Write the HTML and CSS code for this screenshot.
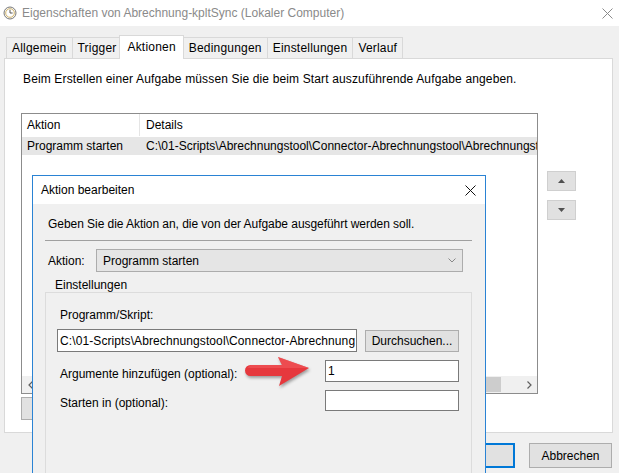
FILE: index.html
```html
<!DOCTYPE html>
<html lang="de">
<head>
<meta charset="utf-8">
<title>Eigenschaften</title>
<link rel="stylesheet" href="styles.css">
</head>
<body>
<div class="win">
  <div class="titlebar">
    <svg class="appicon" viewBox="0 0 14 14"><circle cx="7" cy="7" r="6" fill="#f4f4f4" stroke="#7a7a7a" stroke-width="1"/><circle cx="7" cy="7" r="4.3" fill="#fff" stroke="#c9a64a" stroke-width="0.8"/><path d="M7 3.8V7h2.6" fill="none" stroke="#555" stroke-width="1"/></svg>
    <span class="title">Eigenschaften von Abrechnung-kpltSync (Lokaler Computer)</span>
    <svg class="xicon" viewBox="0 0 11 11"><path d="M0.5 0.5L10.5 10.5M10.5 0.5L0.5 10.5" stroke="#8a8a8a" stroke-width="1"/></svg>
  </div>
  <div class="tabs">
    <div class="tab">Allgemein</div>
    <div class="tab">Trigger</div>
    <div class="tab active">Aktionen</div>
    <div class="tab">Bedingungen</div>
    <div class="tab">Einstellungen</div>
    <div class="tab">Verlauf</div>
  </div>
  <div class="panel">
    <p class="intro">Beim Erstellen einer Aufgabe müssen Sie die beim Start auszuführende Aufgabe angeben.</p>
    <div class="listrow">
      <div class="list">
        <div class="lhead"><div class="c1">Aktion</div><div class="c2">Details</div></div>
        <div class="lrow"><div class="c1">Programm starten</div><div class="c2">C:\01-Scripts\Abrechnungstool\Connector-Abrechnungstool\Abrechnungstool.exe</div></div>
        <div class="lfill"></div>
        <div class="hscroll">
          <div class="sarrow"><svg viewBox="0 0 6 8"><path d="M4.5 0.5L1 4l3.5 3.5" fill="none" stroke="#606060" stroke-width="1.2"/></svg></div>
          <div class="strack"><div class="sthumb"></div></div>
          <div class="sarrow"><svg viewBox="0 0 6 8"><path d="M1.5 0.5L5 4L1.5 7.5" fill="none" stroke="#606060" stroke-width="1.2"/></svg></div>
        </div>
      </div>
      <div class="sidebtns">
        <div class="sbtn"><svg viewBox="0 0 7 4"><path d="M0 4L3.5 0L7 4Z" fill="#505050"/></svg></div>
        <div class="sbtn"><svg viewBox="0 0 7 4"><path d="M0 0L3.5 4L7 0Z" fill="#505050"/></svg></div>
      </div>
    </div>
    <div class="listbtns"><div class="btn wide"></div></div>
  </div>
  <div class="footer">
    <div class="btn okbtn"></div>
    <div class="btn cancel">Abbrechen</div>
  </div>
</div>

<div class="dlg">
  <div class="dtitle">
    <span>Aktion bearbeiten</span>
    <svg class="xicon" viewBox="0 0 11 11"><path d="M0.5 0.5L10.5 10.5M10.5 0.5L0.5 10.5" stroke="#111" stroke-width="1"/></svg>
  </div>
  <div class="dbody">
    <p class="ddesc">Geben Sie die Aktion an, die von der Aufgabe ausgeführt werden soll.</p>
    <div class="sep"></div>
    <div class="arow">
      <span class="alabel">Aktion:</span>
      <div class="select"><span>Programm starten</span><svg viewBox="0 0 8 5"><path d="M0.5 0.5L4 4L7.5 0.5" fill="none" stroke="#888" stroke-width="1"/></svg></div>
    </div>
    <div class="glabel">Einstellungen</div>
    <div class="gbox">
      <div class="flabel">Programm/Skript:</div>
      <div class="prow">
        <div class="tbox path"><span class="clip">C:\01-Scripts\Abrechnungstool\Connector-Abrechnung</span></div>
        <div class="btn browse">Durchsuchen...</div>
      </div>
      <div class="frow r1">
        <span class="rlabel">Argumente hinzufügen (optional):</span>
        <div class="tbox small">1</div>
      </div>
      <div class="frow r2">
        <span class="rlabel">Starten in (optional):</span>
        <div class="tbox small"></div>
      </div>
    </div>
  </div>
</div>

<svg class="arrow" viewBox="0 0 70 36"><path d="M8.5 11H40L36 3L67 14L37 32L40 22H8.5A5.5 5.5 0 0 1 8.5 11Z" fill="#e6383d"/><path d="M8.5 11H40L36 3L67 14L52 14H8.5A5.5 5.5 0 0 0 3 16Z" fill="#f25a5e" opacity="0.6"/></svg>
</body>
</html>
```
FILE: styles.css
```css
* { box-sizing: border-box; margin: 0; padding: 0; }
html, body { width: 619px; height: 473px; overflow: hidden; }
body {
  background: #f0f0f0;
  font-family: "Liberation Sans", Arial, sans-serif;
  font-size: 11px;
  color: #000;
  position: relative;
}
.win { display: flex; flex-direction: column; height: 473px; }

.titlebar {
  height: 26px;
  background: #fff;
  display: flex;
  align-items: center;
  padding: 0 6px 0 3px;
}
.appicon { width: 14px; height: 14px; margin-right: 5px; }
.title { flex: 1; font-size: 12px; color: #8a8a8a; }
.xicon { width: 11px; height: 11px; display: block; }

.tabs {
  height: 32px;
  display: flex;
  align-items: flex-end;
  padding-left: 6px;
  position: relative;
  z-index: 1;
}
.tab {
  height: 21px;
  padding: 0 5px;
  border: 1px solid #d9d9d9;
  border-bottom: none;
  margin-right: -1px;
  display: flex;
  align-items: center;
  background: #f0f0f0;
  font-size: 12px;
  letter-spacing: 0.2px;
}
.tab.active {
  height: 24px;
  margin: 0 -1px -1px -2px;
  padding: 0 7px 2px;
  background: #fff;
  position: relative;
  z-index: 2;
}

.panel {
  margin: 0 6px 0 4px;
  height: 375px;
  background: #fff;
  border: 1px solid #d9d9d9;
  padding: 13px 0 0 16px;
}
.intro { padding-left: 2px; line-height: 15px; font-size: 12px; letter-spacing: 0.14px; }

.listrow { display: flex; margin-top: 26px; }
.list {
  width: 517px;
  height: 281px;
  border: 1px solid #8c8c8c;
  display: flex;
  flex-direction: column;
  background: #fff;
  overflow: hidden;
}
.lhead { display: flex; height: 22px; align-items: stretch; flex: none; }
.lhead .c1 { border-right: 1px solid #e5e5e5; }
.lhead > div { display: flex; align-items: center; }
.lrow {
  display: flex;
  height: 18px;
  margin-top: 1px;
  background: #e6e6e6;
  align-items: center;
  white-space: nowrap;
  flex: none;
}
.c1 { width: 118px; padding-left: 5px; flex: none; font-size: 12px; }
.c2 { padding-left: 6px; font-size: 12px; white-space: nowrap; }
.lfill { flex: 1; }
.hscroll { height: 17px; display: flex; background: #f0f0f0; flex: none; }
.sarrow { width: 17px; display: flex; align-items: center; justify-content: center; }
.sarrow svg { width: 6px; height: 8px; }
.strack { flex: 1; display: flex; align-items: stretch; padding: 1px 0; }
.sthumb { margin-left: 50%; width: 46%; background: #cdcdcd; }

.sidebtns { display: flex; flex-direction: column; gap: 9px; margin: 58px 0 0 9px; }
.sbtn {
  width: 29px;
  height: 20px;
  background: #e1e1e1;
  border: 1px solid #cfcfcf;
  display: flex;
  align-items: center;
  justify-content: center;
}
.sbtn svg { width: 7px; height: 4px; }

.btn {
  background: #e1e1e1;
  border: 1px solid #adadad;
  display: flex;
  align-items: center;
  justify-content: center;
  font-size: 12px;
}
.listbtns { margin-top: 3px; display: flex; }
.wide { width: 75px; height: 23px; }

.footer {
  margin-top: 10px;
  display: flex;
  justify-content: flex-end;
  gap: 14px;
  padding-right: 7px;
}
.okbtn { width: 77px; height: 25px; border: 2px solid #0078d7; }
.cancel { width: 83px; height: 25px; }

/* dialog */
.dlg {
  position: absolute;
  left: 32px;
  top: 175px;
  width: 454px;
  height: 320px;
  border: 1px solid #2a83d4;
  background: #f0f0f0;
  font-size: 12px;
  z-index: 5;
}
.dtitle {
  height: 28px;
  background: #fff;
  display: flex;
  align-items: center;
  justify-content: space-between;
  padding: 0 9px 0 8px;
}
.dbody { padding: 12px 13px 0 12px; }
.ddesc { padding-left: 3px; line-height: 16px; letter-spacing: -0.05px; }
.sep { margin-top: 8px; border-top: 1px solid #a0a0a0; }
.arow { display: flex; align-items: center; margin-top: 8px; }
.alabel { width: 51px; padding-left: 3px; }
.select {
  width: 367px;
  height: 23px;
  background: #e5e5e5;
  border: 1px solid #acacac;
  display: flex;
  align-items: center;
  justify-content: space-between;
  padding: 0 6px 0 6px;
}
.select svg { width: 8px; height: 5px; }
.glabel { margin-top: 6px; line-height: 14px; padding-left: 10px; }
.gbox {
  border: 1px solid #dcdcdc;
  height: 200px;
  padding: 15px 12px 0 11px;
}
.flabel { padding-left: 3px; line-height: 14px; }
.prow { display: flex; align-items: center; margin-top: 7px; gap: 8px; }
.tbox {
  background: #fff;
  border: 1px solid #7a7a7a;
  padding-left: 2px;
  white-space: nowrap;
  overflow: hidden;
  display: flex;
  align-items: center;
}
.clip { letter-spacing: 0.1px; }
.path { width: 300px; height: 23px; }
.browse { width: 94px; height: 22px; flex: none; }
.frow { display: flex; justify-content: space-between; align-items: center; margin-top: 8px; }
.rlabel { padding: 5px 0 0 3px; }
.small { width: 134px; height: 22px; }
.r2 .small { height: 21px; }

.arrow {
  position: absolute;
  left: 242px;
  top: 354px;
  width: 70px;
  height: 36px;
  z-index: 6;
  filter: drop-shadow(1px 2px 1.5px rgba(0, 0, 0, 0.35));
}
```
